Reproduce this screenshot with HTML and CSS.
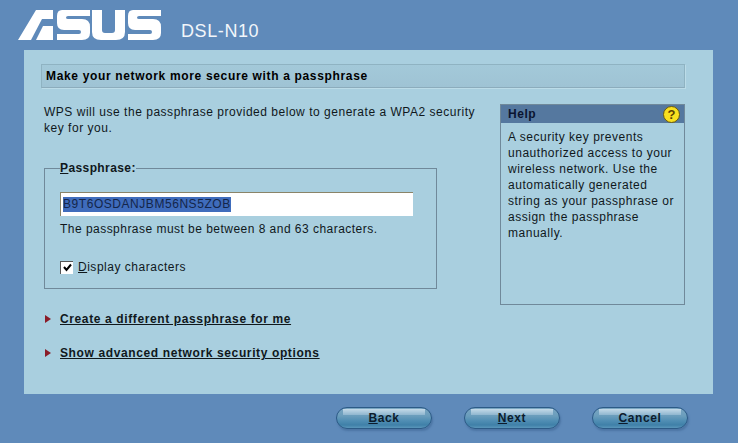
FILE: index.html
```html
<!DOCTYPE html>
<html lang="en">
<head>
    <meta charset="UTF-8">
    <title>DSL-N10 Passphrase</title>
    <link rel="stylesheet" href="styles.css">
</head>
<body>
    <div class="header">
        <svg class="logo" width="146" height="34" viewBox="17 8 146 34" fill="#fff">
            <!-- A -->
            <path d="M18 40 L36 10 H53 V19 H42 L31 40 Z"/>
            <path d="M43 26 H53 V40 H36 Z"/>
            <!-- S -->
            <path d="M62 10 H90 V16 H68 Q66 16 66 17.5 Q66 19 68 19 H82 Q90 19 90 27 V33 Q90 40 82 40 H57 V34 H79 Q81 34 81 32 Q81 30 79 30 H64 Q57 30 57 23 V16 Q57 10 62 10 Z"/>
            <!-- U -->
            <path d="M92 10 H102 V30 Q102 33 105 33 H112 Q115 33 115 30 V10 H125 V32 Q125 40 116 40 H101 Q92 40 92 32 Z"/>
            <!-- S -->
            <path transform="translate(71 0)" d="M62 10 H90 V16 H68 Q66 16 66 17.5 Q66 19 68 19 H82 Q90 19 90 27 V33 Q90 40 82 40 H57 V34 H79 Q81 34 81 32 Q81 30 79 30 H64 Q57 30 57 23 V16 Q57 10 62 10 Z"/>
        </svg>
        <span class="model">DSL-N10</span>
    </div>

    <div class="panel">
        <h1 class="title">Make your network more secure with a passphrase</h1>

        <div class="columns">
            <div class="main">
                <p class="intro">WPS will use the passphrase provided below to generate a WPA2 security key for you.</p>

                <fieldset class="pass-box">
                    <legend><u>P</u>assphrase:</legend>
                    <div class="pass-input"><span class="selected">B9T6OSDANJBM56NS5ZOB</span></div>
                    <p class="pass-note">The passphrase must be between 8 and 63 characters.</p>
                    <div class="check-row">
                        <span class="check">
                            <svg width="9" height="9" viewBox="0 0 9 9"><path d="M1 4 L3.5 7 L8 1.5" fill="none" stroke="#000" stroke-width="2"/></svg>
                        </span>
                        <span><u>D</u>isplay characters</span>
                    </div>
                </fieldset>
            </div>

            <div class="help">
                <div class="help-head">
                    <span>Help</span>
                    <span class="help-icon">?</span>
                </div>
                <p class="help-text">A security key prevents unauthorized access to your wireless network. Use the automatically generated string as your passphrase or assign the passphrase manually.</p>
            </div>
        </div>

        <a class="option" href="#"><span class="arrow"></span><span class="option-text">Create a different passphrase for me</span></a>
        <a class="option" href="#"><span class="arrow"></span><span class="option-text">Show advanced network security options</span></a>
    </div>

    <div class="footer">
        <button class="btn"><u>B</u>ack</button>
        <button class="btn"><u>N</u>ext</button>
        <button class="btn"><u>C</u>ancel</button>
    </div>
</body>
</html>
```

FILE: styles.css
```css
html, body {
    height: 100%;
}

body {
    margin: 0;
    padding: 0;
    overflow: hidden;
    font-family: "Liberation Sans", Arial, sans-serif;
    font-size: 12px;
    letter-spacing: 0.52px;
    color: #10181c;
    background-color: #5f8aba;
}

.header {
    display: flex;
    align-items: flex-start;
    height: 50px;
    padding-left: 17px;
}

.logo {
    margin-top: 8px;
}

.model {
    margin: 20px 0 0 18px;
    font-size: 18px;
    line-height: 22px;
    letter-spacing: 0.6px;
    color: #f2f6fa;
}

.panel {
    width: 689px;
    height: 344px;
    margin-left: 24px;
    padding: 14px 28px 0 17px;
    box-sizing: border-box;
    background-color: #a9cfdf;
}

.title {
    margin: 0;
    height: 24px;
    padding-left: 4px;
    box-sizing: border-box;
    font-size: 12px;
    font-weight: bold;
    line-height: 22px;
    letter-spacing: 0.66px;
    color: #000;
    background: linear-gradient(#a3c9d9, #9fc3d4);
    border: 1px solid #8fb3c2;
    border-bottom-color: #8cacbc;
    box-shadow: 1px 1px 0 #bcdce8;
}

.columns {
    display: flex;
    justify-content: space-between;
    margin-top: 16px;
}

.main {
    width: 440px;
}

.intro {
    margin: 0;
    padding-left: 3px;
    line-height: 16px;
}

.pass-box {
    width: 393px;
    height: 128px;
    margin: 25px 0 0 3px;
    padding: 0 0 0 15px;
    box-sizing: border-box;
    border: 1px solid #70899a;
}

.pass-box legend {
    padding: 0;
    margin-left: 0;
    font-weight: bold;
    line-height: 14px;
    letter-spacing: 0.4px;
}

.pass-input {
    width: 353px;
    height: 24px;
    margin-top: 17px;
    padding: 4px 0 0 2px;
    box-sizing: border-box;
    line-height: 15px;
    letter-spacing: 0.55px;
    background-color: #fff;
    border-top: 1px solid #8a8468;
    border-left: 1px solid #8a8468;
}

.selected {
    display: inline-block;
    color: #14264a;
    background-color: #3f6cbc;
}

.pass-note {
    margin: 5px 0 0;
    line-height: 16px;
    letter-spacing: 0.47px;
}

.check-row {
    display: flex;
    align-items: center;
    gap: 5px;
    margin-top: 22px;
    line-height: 16px;
}

.check {
    display: flex;
    align-items: center;
    justify-content: center;
    width: 13px;
    height: 13px;
    box-sizing: border-box;
    background-color: #fff;
    border-top: 1px solid #555;
    border-left: 1px solid #555;
}

.help {
    width: 185px;
    height: 201px;
    box-sizing: border-box;
    border: 1px solid #70899a;
}

.help-head {
    display: flex;
    justify-content: space-between;
    align-items: center;
    height: 18px;
    padding: 0 4px 0 7px;
    font-weight: bold;
    color: #0a1430;
    background-color: #55789f;
}

.help-icon {
    width: 17px;
    height: 17px;
    font-size: 13px;
    line-height: 15px;
    letter-spacing: 0;
    font-weight: bold;
    text-align: center;
    color: #5a4000;
    background-color: #f8e020;
    border: 1px solid #6a5a10;
    border-radius: 50%;
    box-sizing: border-box;
}

.help-text {
    margin: 0;
    padding: 6px 6px 0 7px;
    line-height: 16px;
}

.option {
    display: flex;
    align-items: center;
    gap: 9px;
    height: 16px;
    margin: 0 0 18px 4px;
    font-weight: bold;
    letter-spacing: 0.62px;
    color: #10181c;
    text-decoration: none;
}

.columns + .option {
    margin-top: 6px;
}

.arrow {
    width: 0;
    height: 0;
    border-top: 4px solid transparent;
    border-bottom: 4px solid transparent;
    border-left: 6px solid #8a1c28;
}

.option-text {
    text-decoration: underline;
}

.footer {
    display: flex;
    justify-content: flex-end;
    gap: 32px;
    padding: 13px 50px 0 0;
}

/* first background layer is the gloss along the top of the button */
.btn {
    width: 96px;
    height: 22px;
    padding: 0;
    font-family: inherit;
    font-size: 12px;
    font-weight: bold;
    letter-spacing: 0.62px;
    color: #0c1c2c;
    background:
        linear-gradient(#c4dae8, #8fb6cf) center 1px / 82px 6px no-repeat,
        linear-gradient(#7aa6c2 0, #6a9dbc 40%, #4f8db3 65%, #3f80a8 85%, #5a96ba 100%);
    border: 1px solid #2c5a86;
    border-radius: 11px;
    box-shadow: 1px 2px 2px #4c75a4;
}
```
